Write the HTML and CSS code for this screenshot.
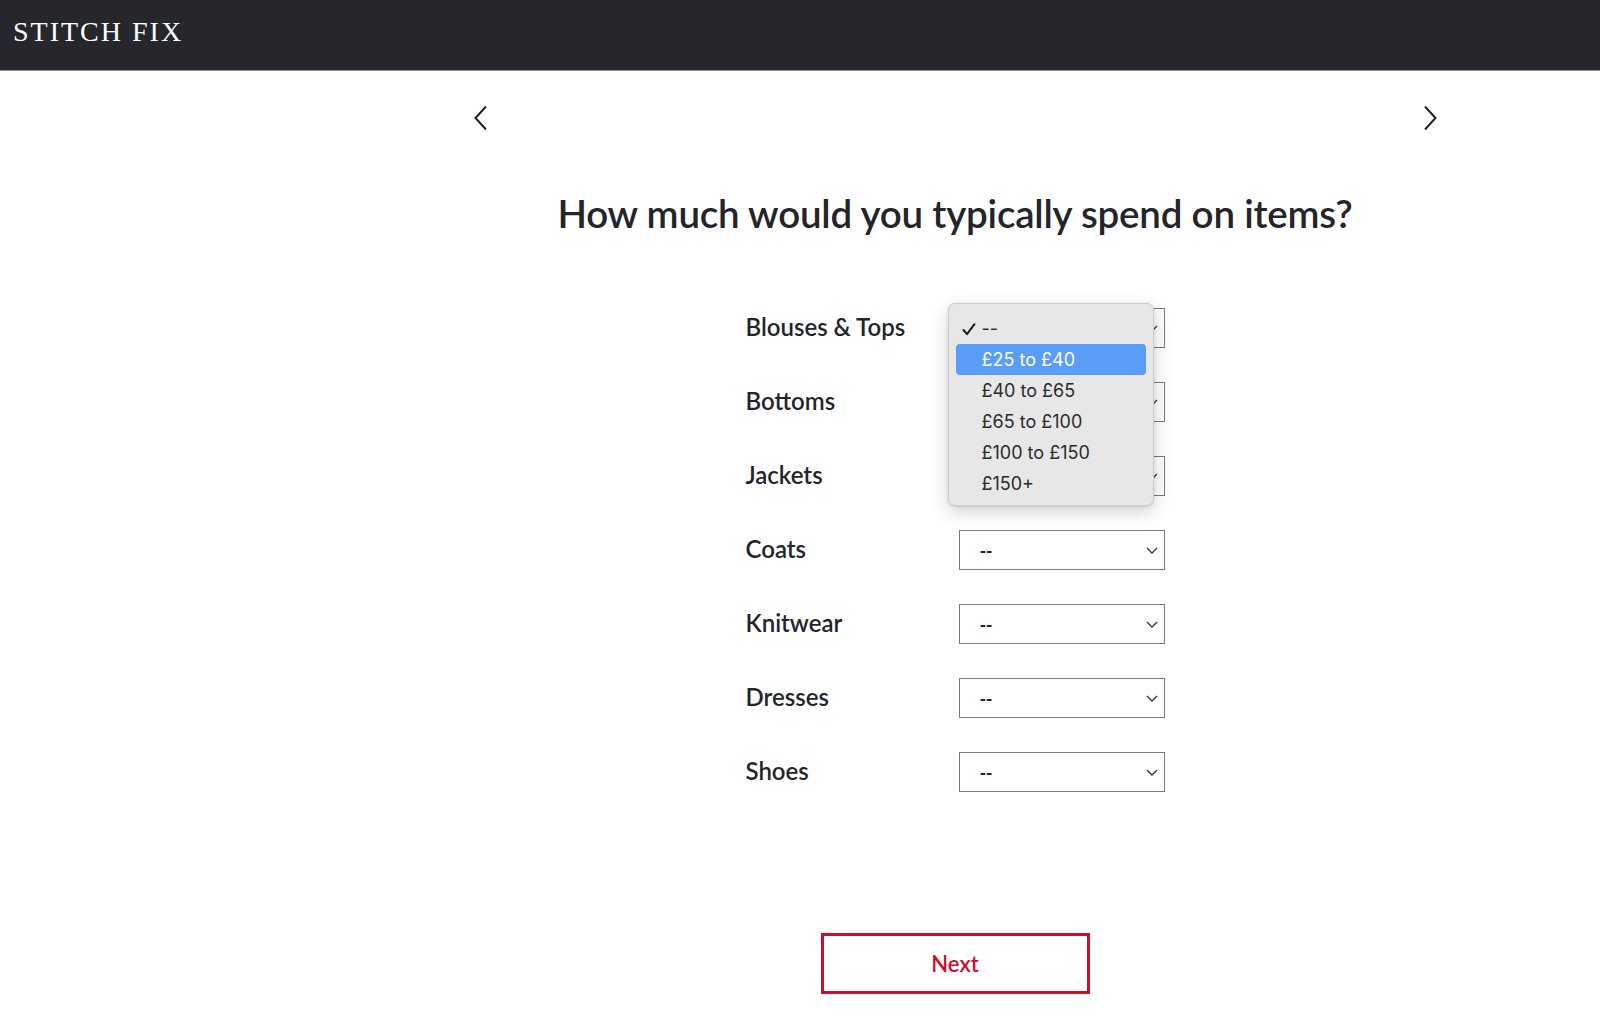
FILE: index.html
```html
<!DOCTYPE html>
<html lang="en">
<head>
<meta charset="utf-8">
<title>Stitch Fix</title>
<link rel="stylesheet" href="styles.css">
</head>
<body>
<header class="topbar">
  <div class="logo">STITCH FIX</div>
</header>
<main class="page">
  <div class="spacer"></div>
  <section class="content">
    <nav class="stepnav">
      <button class="navbtn" aria-label="Previous">
        <svg width="16" height="26" viewBox="0 0 16 26"><path d="M13 1.5 L2.5 13 L13 24.5" fill="none" stroke="#1f2126" stroke-width="2"/></svg>
      </button>
      <button class="navbtn" aria-label="Next">
        <svg width="16" height="26" viewBox="0 0 16 26"><path d="M3 1.5 L13.5 13 L3 24.5" fill="none" stroke="#1f2126" stroke-width="2"/></svg>
      </button>
    </nav>
    <h1 class="title">How much would you typically spend on items?</h1>
    <div class="form">
      <div class="row">
        <label class="label">Blouses &amp; Tops</label>
        <div class="selectwrap">
          <div class="select covered"><span>--</span><svg class="chev" width="12" height="7" viewBox="0 0 12 7"><path d="M1 1 L6 6 L11 1" fill="none" stroke="#333" stroke-width="1.3"/></svg></div>
          <div class="menu">
            <div class="opt checked"><svg class="check" width="14" height="13" viewBox="0 0 14 13"><path d="M1.5 7 L5 11.2 L12.5 1.2" fill="none" stroke="#1c1c1c" stroke-width="2" stroke-linecap="round" stroke-linejoin="round"/></svg>--</div>
            <div class="opt active">£25 to £40</div>
            <div class="opt">£40 to £65</div>
            <div class="opt">£65 to £100</div>
            <div class="opt">£100 to £150</div>
            <div class="opt">£150+</div>
          </div>
        </div>
      </div>
      <div class="row">
        <label class="label">Bottoms</label>
        <div class="selectwrap"><div class="select covered"><span>--</span><svg class="chev" width="12" height="7" viewBox="0 0 12 7"><path d="M1 1 L6 6 L11 1" fill="none" stroke="#333" stroke-width="1.3"/></svg></div></div>
      </div>
      <div class="row">
        <label class="label">Jackets</label>
        <div class="selectwrap"><div class="select covered"><span>--</span><svg class="chev" width="12" height="7" viewBox="0 0 12 7"><path d="M1 1 L6 6 L11 1" fill="none" stroke="#333" stroke-width="1.3"/></svg></div></div>
      </div>
      <div class="row">
        <label class="label">Coats</label>
        <div class="selectwrap"><div class="select"><span>--</span><svg class="chev" width="12" height="7" viewBox="0 0 12 7"><path d="M1 1 L6 6 L11 1" fill="none" stroke="#333" stroke-width="1.3"/></svg></div></div>
      </div>
      <div class="row">
        <label class="label">Knitwear</label>
        <div class="selectwrap"><div class="select"><span>--</span><svg class="chev" width="12" height="7" viewBox="0 0 12 7"><path d="M1 1 L6 6 L11 1" fill="none" stroke="#333" stroke-width="1.3"/></svg></div></div>
      </div>
      <div class="row">
        <label class="label">Dresses</label>
        <div class="selectwrap"><div class="select"><span>--</span><svg class="chev" width="12" height="7" viewBox="0 0 12 7"><path d="M1 1 L6 6 L11 1" fill="none" stroke="#333" stroke-width="1.3"/></svg></div></div>
      </div>
      <div class="row">
        <label class="label">Shoes</label>
        <div class="selectwrap"><div class="select"><span>--</span><svg class="chev" width="12" height="7" viewBox="0 0 12 7"><path d="M1 1 L6 6 L11 1" fill="none" stroke="#333" stroke-width="1.3"/></svg></div></div>
      </div>
    </div>
    <div class="actions">
      <button class="nextbtn">Next</button>
    </div>
  </section>
</main>
</body>
</html>
```

FILE: styles.css
```css
* { box-sizing: border-box; }
html, body { margin: 0; padding: 0; }
body {
  background: #ffffff;
  color: #23252b;
  font-family: Lato, "Noto Sans", sans-serif;
  width: 1600px;
  height: 1024px;
  overflow: hidden;
}
.topbar {
  height: 71px;
  background: #25272d;
  border-bottom: 1px solid #8a8b8e;
  display: flex;
  align-items: center;
  padding-left: 13px;
}
.logo {
  font-family: "Liberation Serif", "DejaVu Serif", serif;
  font-size: 28px;
  letter-spacing: 2px;
  color: #ffffff;
  margin-top: -7px;
}
.page {
  display: grid;
  grid-template-columns: 310px 1fr;
}
.content {
  display: flex;
  flex-direction: column;
  align-items: center;
}
.stepnav {
  width: 100%;
  display: flex;
  justify-content: space-between;
  padding: 34px 162px 0 163px;
}
.navbtn {
  background: none;
  border: 0;
  padding: 0;
  width: 16px;
  height: 26px;
  display: block;
}
.title {
  margin: 60px 0 0;
  font-size: 38.5px;
  font-weight: 600;
  line-height: 44px;
  color: #23252b;
  letter-spacing: -0.2px;
}
.form {
  margin-top: 73px;
  display: flex;
  flex-direction: column;
  gap: 34px;
}
.row {
  display: grid;
  grid-template-columns: 213px 206px;
  align-items: center;
  height: 40px;
}
.label {
  font-size: 24px;
  font-weight: 600;
  color: #23252b;
  margin-top: -4px;
}
.selectwrap { position: relative; }
.select {
  height: 40px;
  border: 1px solid #7b7c80;
  background: #fff;
  display: flex;
  align-items: center;
  justify-content: space-between;
  padding: 0 6px 0 20px;
  font-size: 18px;
  color: #23252b;
}
.select span { margin-top: 2px; letter-spacing: -0.5px; font-weight: 700; }
.select.covered span { visibility: hidden; }
.chev { display: block; }
.menu {
  position: absolute;
  left: -11px;
  top: -5px;
  width: 206px;
  padding: 9px 7px 6px 7px;
  background: #e7e7e7;
  border: 1px solid #cdcdcd;
  border-radius: 7px;
  box-shadow: 0 6px 18px rgba(0,0,0,0.18), 0 1px 3px rgba(0,0,0,0.1);
  font-family: Inter, "Noto Sans", sans-serif;
  font-size: 18px;
  color: #2b2b2b;
  z-index: 5;
}
.opt {
  position: relative;
  height: 31px;
  line-height: 31px;
  padding-left: 26px;
  border-radius: 4px;
}
.opt.active {
  background: #5b9cf8;
  color: #ffffff;
}
.check {
  position: absolute;
  left: 6px;
  top: 10px;
  display: block;
}
.actions {
  margin-top: 141px;
}
.nextbtn {
  width: 269px;
  height: 61px;
  border: 3px solid #d10d2c;
  background: #fff;
  color: #d10d2c;
  font-family: Lato, "Noto Sans", sans-serif;
  font-size: 22px;
  font-weight: 600;
  padding: 0;
}
```
